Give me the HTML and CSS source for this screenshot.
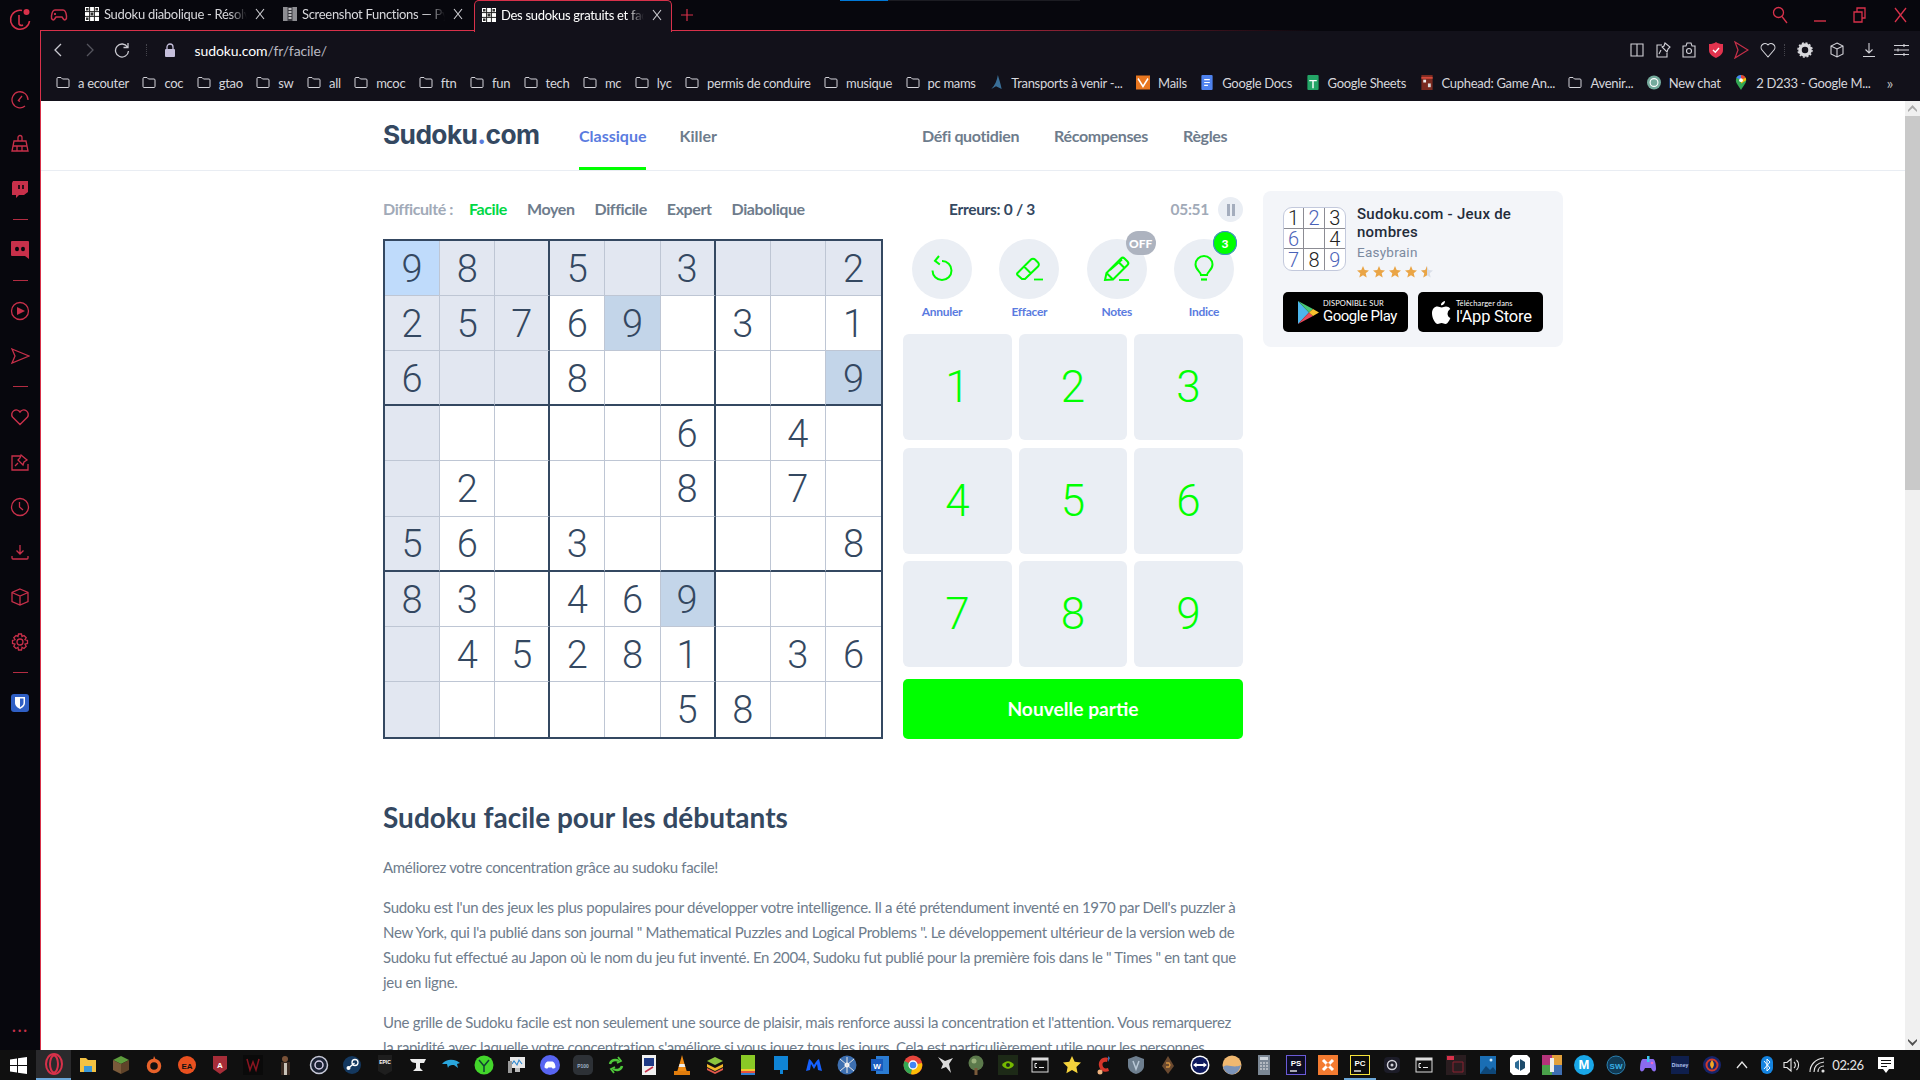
FILE: index.html
```html
<!DOCTYPE html>
<html lang="fr">
<head>
<meta charset="utf-8">
<title>Sudoku facile</title>
<link rel="stylesheet" href="styles.css">
</head>
<body>
<svg class="defs" width="0" height="0">
  <symbol id="folder" viewBox="0 0 14 12"><path d="M1 2a1 1 0 0 1 1-1h3l1.500 1.500H12a1 1 0 0 1 1 1V10a1 1 0 0 1-1 1H2a1 1 0 0 1-1-1Z" fill="none" stroke="#d4d4da" stroke-width="1"/></symbol>
  <symbol id="gridfav" viewBox="0 0 14 14"><rect width="14" height="14" fill="#fff"/><path d="M4.600 0v14M9.400 0v14M0 4.600h14M0 9.400h14" stroke="#222" stroke-width="1"/><path d="M1 1h2.500v2.500H1zM5.600 5.600h2.800v2.800H5.600zM10.500 1H13v2.500h-2.500zM1 10.500h2.500V13H1z" fill="#333"/></symbol>
  <symbol id="docfav" viewBox="0 0 14 14"><rect width="14" height="14" fill="#8d8d92"/><rect x="4.500" width="5" height="14" fill="#3a3a40"/><path d="M5.500 2h3M5.500 5h3M5.500 8h3M5.500 11h3" stroke="#e6e6e6" stroke-width="1.300"/></symbol>
  <symbol id="close" viewBox="0 0 10 12"><path d="M1 1l8 10M9 1l-8 10" stroke="#cfcfd4" stroke-width="1.100" fill="none"/></symbol>
  <symbol id="cmd" viewBox="0 0 20 20"><rect x="2" y="3" width="16" height="14" fill="#111" stroke="#ddd"/><rect x="2" y="3" width="16" height="2.500" fill="#ddd"/><path d="M5 8.500h2M5 8.500v4h2M9 12.500h5" stroke="#eee" fill="none"/></symbol>
</svg>

<div class="window">
  <aside class="sidebar">
    <div class="side-logo"><svg width="24" height="24" viewBox="0 0 24 24" fill="none" stroke="#d8314a" stroke-width="1.600"><path d="M14 3.500A9.500 9.500 0 1 0 21.500 14"/><path d="M11 8v9a3 3 0 0 0 4 1"/><circle cx="18.500" cy="5" r="3" fill="#d8314a" stroke="none"/></svg></div>
    <div class="side-item"><svg width="20" height="20" viewBox="0 0 20 20" fill="none" stroke="#c8304a" stroke-width="1.300"><path d="M15 17a8 8 0 1 1 3-6"/><path d="M8 12l4-5M8.500 11.500l1.500 1"/></svg></div>
    <div class="side-item"><svg width="20" height="20" viewBox="0 0 20 20" fill="none" stroke="#c8304a" stroke-width="1.300"><path d="M8 7V3.500a2 2 0 0 1 4 0V7M4 7h12l2 10H2ZM3 12h14M7 12v5M12 12v5"/></svg></div>
    <div class="side-item"><svg width="20" height="20" viewBox="0 0 20 20"><path d="M3 2h15v11l-4 3h-5l-3 3v-3H2V4Z" fill="#c8304a"/><path d="M9 6v4M13 6v4" stroke="#07070d" stroke-width="1.600"/></svg></div>
    <div class="side-line"></div>
    <div class="side-item"><svg width="20" height="20" viewBox="0 0 20 20"><path d="M2 1h16a1 1 0 0 1 1 1v17l-4-3H2a1 1 0 0 1-1-1V2a1 1 0 0 1 1-1Z" fill="#c8304a"/><ellipse cx="7" cy="9" rx="2" ry="2.300" fill="#07070d"/><ellipse cx="13" cy="9" rx="2" ry="2.300" fill="#07070d"/></svg></div>
    <div class="side-line"></div>
    <div class="side-item"><svg width="20" height="20" viewBox="0 0 20 20"><circle cx="10" cy="10" r="8.500" fill="none" stroke="#c8304a" stroke-width="1.300"/><path d="M7 6l8 4-8 4Z" fill="#c8304a"/></svg></div>
    <div class="side-item"><svg width="20" height="20" viewBox="0 0 20 20" fill="none" stroke="#c8304a" stroke-width="1.300"><path d="M2 3l17 7-17 7 3-7Z"/></svg></div>
    <div class="side-line"></div>
    <div class="side-item"><svg width="20" height="20" viewBox="0 0 20 20" fill="none" stroke="#c8304a" stroke-width="1.400"><path d="M10 17.500 2.500 10A4.500 4.500 0 0 1 10 5a4.500 4.500 0 0 1 7.500 5Z"/></svg></div>
    <div class="side-item"><svg width="20" height="20" viewBox="0 0 20 20" fill="none" stroke="#c8304a" stroke-width="1.300"><path d="M10 4H2v14h16v-6M11 3l6 5-3 2-1 3-5-5 2-2ZM8 11l-3 3"/></svg></div>
    <div class="side-item"><svg width="20" height="20" viewBox="0 0 20 20" fill="none" stroke="#c8304a" stroke-width="1.300"><circle cx="10" cy="10" r="8.500"/><path d="M9.500 5v5l3.500 3"/></svg></div>
    <div class="side-item"><svg width="20" height="20" viewBox="0 0 20 20" fill="none" stroke="#c8304a" stroke-width="1.300"><path d="M10 3v9M6.500 8.500 10 12l3.500-3.500M2 14v2a1 1 0 0 0 1 1h14a1 1 0 0 0 1-1v-2"/></svg></div>
    <div class="side-item"><svg width="20" height="20" viewBox="0 0 20 20" fill="none" stroke="#c8304a" stroke-width="1.300"><path d="M10 2l8 3.500v9L10 18l-8-3.500v-9ZM2 5.500 10 9l8-3.500M10 9v9"/></svg></div>
    <div class="side-item"><svg width="20" height="20" viewBox="0 0 20 20" fill="none" stroke="#c8304a" stroke-width="1.300"><circle cx="10" cy="10" r="3"/><path d="M8.500 2h3l.5 2.500 2-1 2.200 2.200-1.200 2 2.500.8v3l-2.500.7 1.200 2.100-2.200 2.200-2-1.200-.5 2.700h-3L8 15.300l-2 1.200-2.200-2.200L5 12.200 2.500 11.500v-3L5 7.700 3.800 5.700 6 3.500l2 1Z"/></svg></div>
    <div class="side-line"></div>
    <div class="side-item"><svg width="18" height="18" viewBox="0 0 18 18"><rect width="18" height="18" rx="3" fill="#2f5fc4"/><path d="M4 3h10v6c0 3-3 5-5 6-2-1-5-3-5-6Z" fill="#fff"/><path d="M9 4.500h3.500V9c0 2-2 3.500-3.500 4.300Z" fill="#2f5fc4"/></svg></div>
    <div class="side-dots">•••</div>
  </aside>

  <div class="browser">
    <header class="tabbar">
      <div class="topline"></div>
      <div class="tab-game"><svg width="18" height="14" viewBox="0 0 18 14" fill="none" stroke="#c8304a" stroke-width="1.500"><path d="M5 2h8c2 0 3 2 3.500 6s-2 5-3.500 2.500L12 9H6l-1 1.500C3.500 13 1 12 1.500 8S3 2 5 2Z"/><path d="M5 5v2M4 6h2"/></svg></div>
      <div class="tab"><svg class="fav"><use href="#gridfav"/></svg><span class="tab-title">Sudoku diabolique - Résolvez</span><svg class="tab-x"><use href="#close"/></svg></div>
      <div class="tab"><svg class="fav"><use href="#docfav"/></svg><span class="tab-title">Screenshot Functions — PyAutoGUI</span><svg class="tab-x"><use href="#close"/></svg></div>
      <div class="tab tab-active"><svg class="fav"><use href="#gridfav"/></svg><span class="tab-title">Des sudokus gratuits et faciles</span><svg class="tab-x"><use href="#close"/></svg></div>
      <div class="tab-plus"><svg width="12" height="12" viewBox="0 0 12 12" stroke="#d8314a" stroke-width="1.200"><path d="M6 0v12M0 6h12"/></svg></div>
      <div class="winbtns">
        <div class="winbtn"><svg width="16" height="18" viewBox="0 0 16 18" fill="none" stroke="#d8314a" stroke-width="1.300"><circle cx="6.500" cy="6.500" r="5"/><path d="M10 10.500l5 6.500"/></svg></div>
        <div class="winbtn"><svg width="12" height="16" viewBox="0 0 12 16" stroke="#d8314a" stroke-width="1.400"><path d="M0 14h12"/></svg></div>
        <div class="winbtn"><svg width="14" height="16" viewBox="0 0 14 16" fill="none" stroke="#d8314a" stroke-width="1.300"><path d="M1 5h8v10H1zM4 5V1h8v10H9"/></svg></div>
        <div class="winbtn"><svg width="13" height="16" viewBox="0 0 13 16" stroke="#d8314a" stroke-width="1.300"><path d="M1 1l11 14M12 1 1 15"/></svg></div>
      </div>
    </header>

    <div class="browser-body">
      <div class="toolbar">
        <div class="nav"><svg width="10" height="16" viewBox="0 0 10 16" fill="none" stroke="#c9c9d0" stroke-width="1.300"><path d="M8 2 2 8l6 6"/></svg></div>
        <div class="nav"><svg width="10" height="16" viewBox="0 0 10 16" fill="none" stroke="#55555e" stroke-width="1.300"><path d="m2 2 6 6-6 6"/></svg></div>
        <div class="nav"><svg width="16" height="16" viewBox="0 0 16 16" fill="none" stroke="#c9c9d0" stroke-width="1.300"><path d="M13.500 5A6.500 6.500 0 1 0 14.500 9M14 1v4.500H9.500"/></svg></div>
        <div class="nav-sep"></div>
        <svg class="lock" width="12" height="14" viewBox="0 0 12 14"><path d="M3 6V4a3 3 0 0 1 6 0v2" fill="none" stroke="#c5bfdc" stroke-width="1.300"/><rect x="1" y="6" width="10" height="8" rx="1" fill="#c5bfdc"/></svg>
        <div class="url"><span class="url-host">sudoku.com</span>/fr/facile/</div>
        <div class="tools-a">
          <div class="tool"><svg width="14" height="16" viewBox="0 0 14 16" fill="none" stroke="#d2d2d8" stroke-width="1.100"><path d="M1 2h12v12H1zM7 2v12"/></svg></div>
          <div class="tool"><svg width="15" height="16" viewBox="0 0 15 16" fill="none" stroke="#d2d2d8" stroke-width="1.100"><path d="M6 3H1v12h10v-4M9 1l5 4-2 2-1 3-5-5 2-1ZM5 8 3 12"/></svg></div>
          <div class="tool"><svg width="14" height="16" viewBox="0 0 14 16" fill="none" stroke="#d2d2d8" stroke-width="1.100"><path d="M1 4h3l1-3h4l1 3h3v11H1Z"/><circle cx="7" cy="9" r="2.500"/></svg></div>
          <div class="tool"><svg width="14" height="16" viewBox="0 0 14 16"><path d="M7 0c2 1.500 4 2 7 2v6c0 4-3 6-7 8-4-2-7-4-7-8V2c3 0 5-.5 7-2Z" fill="#e2334e"/><path d="M4 8l2.300 2.300L10 6" fill="none" stroke="#fff" stroke-width="1.400"/></svg></div>
          <div class="tool"><svg width="15" height="18" viewBox="0 0 15 18" fill="none" stroke="#c8304a" stroke-width="1.200"><path d="M1 1l13 8-13 8 3-8Z"/></svg></div>
          <div class="tool"><svg width="16" height="16" viewBox="0 0 16 16" fill="none" stroke="#d2d2d8" stroke-width="1.100"><path d="M8 15 2 8a3.500 3.500 0 0 1 6-5 3.500 3.500 0 0 1 6 5Z"/></svg></div>
        </div>
        <div class="tools-sep"></div>
        <div class="tools-b">
          <div class="tool-b"><svg width="16" height="16" viewBox="0 0 16 16"><circle cx="8" cy="8" r="5" fill="none" stroke="#d8d8dc" stroke-width="3.500"/><circle cx="8" cy="8" r="7" fill="none" stroke="#d8d8dc" stroke-width="1.500" stroke-dasharray="2 1.700"/></svg></div>
          <div class="tool-b"><svg width="14" height="16" viewBox="0 0 14 16" fill="none" stroke="#d2d2d8" stroke-width="1.100"><path d="M7 1l6 3v8l-6 3-6-3V4ZM1 4l6 3 6-3M7 7v8"/></svg></div>
          <div class="tool-b"><svg width="14" height="16" viewBox="0 0 14 16" fill="none" stroke="#d2d2d8" stroke-width="1.100"><path d="M7 1v10M3.500 7.500 7 11l3.500-3.500M1 14.500h12"/></svg></div>
          <div class="tool-b"><svg width="15" height="14" viewBox="0 0 15 14" fill="none" stroke="#d2d2d8" stroke-width="1.100"><path d="M0 2.500h15M0 7h15M0 11.500h15M10 1v3M4 5.500v3M10 10v3"/></svg></div>
        </div>
      </div>

      <nav class="bookmarks">
        <div class="bm"><svg class="bm-ico"><use href="#folder"/></svg>a ecouter</div>
        <div class="bm"><svg class="bm-ico"><use href="#folder"/></svg>coc</div>
        <div class="bm"><svg class="bm-ico"><use href="#folder"/></svg>gtao</div>
        <div class="bm"><svg class="bm-ico"><use href="#folder"/></svg>sw</div>
        <div class="bm"><svg class="bm-ico"><use href="#folder"/></svg>all</div>
        <div class="bm"><svg class="bm-ico"><use href="#folder"/></svg>mcoc</div>
        <div class="bm"><svg class="bm-ico"><use href="#folder"/></svg>ftn</div>
        <div class="bm"><svg class="bm-ico"><use href="#folder"/></svg>fun</div>
        <div class="bm"><svg class="bm-ico"><use href="#folder"/></svg>tech</div>
        <div class="bm"><svg class="bm-ico"><use href="#folder"/></svg>mc</div>
        <div class="bm"><svg class="bm-ico"><use href="#folder"/></svg>lyc</div>
        <div class="bm"><svg class="bm-ico"><use href="#folder"/></svg>permis de conduire</div>
        <div class="bm"><svg class="bm-ico"><use href="#folder"/></svg>musique</div>
        <div class="bm"><svg class="bm-ico"><use href="#folder"/></svg>pc mams</div>
        <div class="bm"><svg class="bm-ico" viewBox="0 0 14 16"><path d="M9 0c1 4 3 9 4 15L7 12l-5 3C6 11 8 6 9 0Z" fill="#3a6f98"/></svg>Transports à venir -...</div>
        <div class="bm"><svg class="bm-ico" viewBox="0 0 14 14"><rect width="14" height="14" fill="#e8761f"/><path d="M2 3l5 8 5-8" fill="none" stroke="#fff" stroke-width="1.500"/></svg>Mails</div>
        <div class="bm"><svg class="bm-ico" viewBox="0 0 14 16"><rect x="1" width="12" height="16" rx="1" fill="#4e82ee"/><path d="M4 5h6M4 8h6M4 11h4" stroke="#fff" stroke-width="1.300"/></svg>Google Docs</div>
        <div class="bm"><svg class="bm-ico" viewBox="0 0 14 16"><rect x="1" width="12" height="16" rx="1" fill="#23a566"/><path d="M3 6h8M7 6v8" stroke="#fff" stroke-width="1.500"/></svg>Google Sheets</div>
        <div class="bm"><svg class="bm-ico" viewBox="0 0 14 16"><rect x="1" width="12" height="16" fill="#7a2a20"/><rect x="3" y="5" width="3" height="3" fill="#eee"/><rect x="8" y="9" width="3" height="4" fill="#ddd"/><path d="M1 3h12" stroke="#d4493a" stroke-width="2"/></svg>Cuphead: Game An...</div>
        <div class="bm"><svg class="bm-ico"><use href="#folder"/></svg>Avenir...</div>
        <div class="bm"><svg class="bm-ico" viewBox="0 0 16 16"><circle cx="8" cy="8" r="8" fill="#74aa9c"/><circle cx="8" cy="8" r="4.500" fill="none" stroke="#fff" stroke-width="1.300"/></svg>New chat</div>
        <div class="bm"><svg class="bm-ico" viewBox="0 0 12 16"><path d="M6 0a5.500 5.500 0 0 1 5.500 5.500C11.500 9 8 12 6 16 4 12 .5 9 .5 5.500A5.500 5.500 0 0 1 6 0Z" fill="#34a853"/><path d="M1 3a5.500 5.500 0 0 1 5-3v5Z" fill="#4285f4"/><path d="M6 0a5.500 5.500 0 0 1 5 3L6 5Z" fill="#ea4335"/><path d="M6 5l5-2a5.500 5.500 0 0 1 .5 2.500L6 9Z" fill="#fbbc04"/><circle cx="6" cy="5.500" r="2" fill="#fff"/></svg>2 D233 - Google M...</div>
        <div class="bm-more">»</div>
      </nav>

      <main class="page">
        <div class="page-scroll">
          <div class="site-header">
            <div class="logo">Sudoku<span class="logo-dot">.</span>com</div>
            <div class="main-tabs">
              <a class="mtab mtab-on">Classique</a>
              <a class="mtab">Killer</a>
            </div>
            <div class="sec-links">
              <a class="sec">Défi quotidien</a>
              <a class="sec">Récompenses</a>
              <a class="sec">Règles</a>
            </div>
          </div>

          <div class="wrap">
            <div class="col-main">
              <div class="game">
                <div class="difficulty">
                  <span class="diff-label">Difficulté :</span>
                  <a class="diff diff-on">Facile</a>
                  <a class="diff">Moyen</a>
                  <a class="diff">Difficile</a>
                  <a class="diff">Expert</a>
                  <a class="diff">Diabolique</a>
                </div>
                <div class="status">
                  <span class="errors">Erreurs: 0 / 3</span>
                  <span class="timer">05:51</span>
                  <span class="pause"><svg width="8" height="12" viewBox="0 0 8 12" fill="#a4adbd"><rect width="3" height="12"/><rect x="5" width="3" height="12"/></svg></span>
                </div>

                <div class="board">
                  <div class="c h s">9</div><div class="c h">8</div><div class="c h b"></div><div class="c h">5</div><div class="c h"></div><div class="c h b">3</div><div class="c h"></div><div class="c h"></div><div class="c h e">2</div>
                  <div class="c h">2</div><div class="c h">5</div><div class="c h b">7</div><div class="c">6</div><div class="c m">9</div><div class="c b"></div><div class="c">3</div><div class="c"></div><div class="c e">1</div>
                  <div class="c h t">6</div><div class="c h t"></div><div class="c h t b"></div><div class="c t">8</div><div class="c t"></div><div class="c t b"></div><div class="c t"></div><div class="c t"></div><div class="c m t e">9</div>
                  <div class="c h"></div><div class="c"></div><div class="c b"></div><div class="c"></div><div class="c"></div><div class="c b">6</div><div class="c"></div><div class="c">4</div><div class="c e"></div>
                  <div class="c h"></div><div class="c">2</div><div class="c b"></div><div class="c"></div><div class="c"></div><div class="c b">8</div><div class="c"></div><div class="c">7</div><div class="c e"></div>
                  <div class="c h t">5</div><div class="c t">6</div><div class="c t b"></div><div class="c t">3</div><div class="c t"></div><div class="c t b"></div><div class="c t"></div><div class="c t"></div><div class="c t e">8</div>
                  <div class="c h">8</div><div class="c">3</div><div class="c b"></div><div class="c">4</div><div class="c">6</div><div class="c m b">9</div><div class="c"></div><div class="c"></div><div class="c e"></div>
                  <div class="c h"></div><div class="c">4</div><div class="c b">5</div><div class="c">2</div><div class="c">8</div><div class="c b">1</div><div class="c"></div><div class="c">3</div><div class="c e">6</div>
                  <div class="c h l"></div><div class="c l"></div><div class="c b l"></div><div class="c l"></div><div class="c l"></div><div class="c b l">5</div><div class="c l">8</div><div class="c l"></div><div class="c e l"></div>
                </div>

                <div class="controls">
                  <div class="actions">
                    <div class="action">
                      <div class="action-btn"><svg width="30" height="30" viewBox="0 0 30 30" fill="none" stroke="#00ff00" stroke-width="2"><path d="M15 7a9.500 9.500 0 1 1-9.500 9.500"/><path d="M12 2 8 6.800l4.800 3.700"/></svg></div>
                      <span class="action-label">Annuler</span>
                    </div>
                    <div class="action">
                      <div class="action-btn"><svg width="30" height="30" viewBox="0 0 30 30" fill="none" stroke="#00ff00" stroke-width="2"><path d="M3.500 19 17 5.500a2.800 2.800 0 0 1 4 0l3 3a2.800 2.800 0 0 1 0 4L11 25H8l-4.500-4a1.500 1.500 0 0 1 0-2ZM10 12.500l7 7"/><path d="M20 25.500h9" stroke-width="1.800"/></svg></div>
                      <span class="action-label">Effacer</span>
                    </div>
                    <div class="action">
                      <div class="action-btn"><svg width="30" height="30" viewBox="0 0 30 30" fill="none" stroke="#00ff00" stroke-width="2"><path d="M3 26l1.500-7L19 4.500a2.500 2.500 0 0 1 3.500 0l3 3a2.500 2.500 0 0 1 0 3.500L11 25.500ZM16 7.500l6.500 6.500M4.500 19l6.500 6.500M8 16 20 5.500"/><path d="M17 26h10" stroke-width="1.800"/></svg><span class="badge badge-off">OFF</span></div>
                      <span class="action-label">Notes</span>
                    </div>
                    <div class="action">
                      <div class="action-btn"><svg width="30" height="30" viewBox="0 0 30 30" fill="none" stroke="#00ff00" stroke-width="2"><path d="M12 21c0-3-5.500-5-5.500-10.500a8.500 8.500 0 0 1 17 0c0 5.500-5.500 7.500-5.500 10.500Z"/><path d="M12 25.500h6" stroke-width="2.200"/></svg><span class="badge badge-num">3</span></div>
                      <span class="action-label">Indice</span>
                    </div>
                  </div>
                  <div class="numpad">
                    <div class="key">1</div><div class="key">2</div><div class="key">3</div>
                    <div class="key">4</div><div class="key">5</div><div class="key">6</div>
                    <div class="key">7</div><div class="key">8</div><div class="key">9</div>
                  </div>
                  <div class="new-game">Nouvelle partie</div>
                </div>
              </div>

              <article class="article">
                <h2 class="article-title">Sudoku facile pour les débutants</h2>
                <p class="article-p">Améliorez votre concentration grâce au sudoku facile!</p>
                <p class="article-p">Sudoku est l'un des jeux les plus populaires pour développer votre intelligence. Il a été prétendument inventé en 1970 par Dell's puzzler à<br>New York, qui l'a publié dans son journal " Mathematical Puzzles and Logical Problems ". Le développement ultérieur de la version web de<br>Sudoku fut effectué au Japon où le nom du jeu fut inventé. En 2004, Sudoku fut publié pour la première fois dans le " Times " en tant que<br>jeu en ligne.</p>
                <p class="article-p">Une grille de Sudoku facile est non seulement une source de plaisir, mais renforce aussi la concentration et l'attention. Vous remarquerez<br>la rapidité avec laquelle votre concentration s'améliore si vous jouez tous les jours. Cela est particulièrement utile pour les personnes</p>
              </article>
            </div>

            <aside class="promo">
              <div class="promo-top">
                <div class="app-icon">
                  <span class="ai">1</span><span class="ai ai-b">2</span><span class="ai">3</span>
                  <span class="ai ai-b">6</span><span class="ai"></span><span class="ai">4</span>
                  <span class="ai ai-b">7</span><span class="ai">8</span><span class="ai ai-b">9</span>
                </div>
                <div class="app-info">
                  <div class="app-name">Sudoku.com - Jeux de nombres</div>
                  <div class="app-dev">Easybrain</div>
                  <div class="stars">
                    <svg class="star" viewBox="0 0 12 12"><path d="M6 0l1.700 4.100 4.300.3-3.300 2.800 1 4.300L6 9.200 2.300 11.500l1-4.300L0 4.400l4.300-.3Z" fill="#eaa546"/></svg>
                    <svg class="star" viewBox="0 0 12 12"><path d="M6 0l1.700 4.100 4.300.3-3.300 2.800 1 4.300L6 9.200 2.300 11.500l1-4.300L0 4.400l4.300-.3Z" fill="#eaa546"/></svg>
                    <svg class="star" viewBox="0 0 12 12"><path d="M6 0l1.700 4.100 4.300.3-3.300 2.800 1 4.300L6 9.200 2.300 11.500l1-4.300L0 4.400l4.300-.3Z" fill="#eaa546"/></svg>
                    <svg class="star" viewBox="0 0 12 12"><path d="M6 0l1.700 4.100 4.300.3-3.300 2.800 1 4.300L6 9.200 2.300 11.500l1-4.300L0 4.400l4.300-.3Z" fill="#eaa546"/></svg>
                    <svg class="star" viewBox="0 0 12 12"><path d="M6 0l1.700 4.100 4.300.3-3.300 2.800 1 4.300L6 9.200 2.300 11.500l1-4.300L0 4.400l4.300-.3Z" fill="#d9dee8"/><path d="M6 0v9.200L2.300 11.500l1-4.300L0 4.400l4.300-.3Z" fill="#eaa546"/></svg>
                  </div>
                </div>
              </div>
              <div class="stores">
                <div class="store">
                  <svg width="23" height="25" viewBox="0 0 23 25"><path d="M1 1v23l11-11.500Z" fill="#4db6ec"/><path d="M1 1l15 8-4 3.500Z" fill="#48c774"/><path d="M1 24l15-8-4-3.500Z" fill="#e9495a"/><path d="M16 9l6 3.500-6 3.500-4-3.500Z" fill="#f9c22e"/></svg>
                  <div class="store-text store-text-play"><span class="store-small">DISPONIBLE SUR</span><span class="store-big store-big-play">Google Play</span></div>
                </div>
                <div class="store">
                  <svg width="19" height="23" viewBox="0 0 19 23" fill="#fff"><path d="M13 0c.2 2-1.800 4.500-4 4.300C8.800 2.200 11 .2 13 0ZM15.700 12.200c0-2.200 1.300-3.500 2.600-4.300-1-1.500-2.800-2.300-4.300-2.300-1.800 0-3 1-4.300 1-1.400 0-2.700-1-4.300-1C2.500 5.600 0 8.200 0 12.300 0 17 3 23 5.800 23c1.300 0 2-.9 3.800-.9s2.400.9 3.800.9c2.200 0 4-3.700 5-6-2-.8-2.900-2.600-2.900-4.800Z"/></svg>
                  <div class="store-text"><span class="store-small">Télécharger dans</span><span class="store-big">l'App Store</span></div>
                </div>
              </div>
            </aside>
          </div>
        </div>
        <div class="scrollbar">
          <div class="sb-arrow"><svg width="9" height="7" viewBox="0 0 9 7" fill="#a8a8a8"><path d="M4.500 0 9 5v2L4.500 3 0 7V5Z"/></svg></div>
          <div class="sb-track"><div class="sb-thumb"></div></div>
          <div class="sb-arrow"><svg width="9" height="7" viewBox="0 0 9 7" fill="#505050"><path d="M4.500 7 0 2V0l4.500 4L9 0v2Z"/></svg></div>
        </div>
      </main>
    </div>
  </div>
</div>

<footer class="taskbar">
  <div class="tb-start"><svg width="17" height="17" viewBox="0 0 17 17" fill="#fff"><path d="M0 2.400 7 1.400V8H0ZM8 1.200 17 0v8H8ZM0 9h7v6.600L0 14.600ZM8 9h9v8l-9-1.300Z"/></svg></div>
  <div class="tb-opera"><svg width="20" height="22" viewBox="0 0 20 22" fill="none" stroke="#d8314a" stroke-width="2"><ellipse cx="10" cy="11" rx="8" ry="10"/><ellipse cx="10" cy="11" rx="4" ry="8.500"/></svg></div>
  <div class="tb-apps">
    <div class="ti"><svg class="tsv" viewBox="0 0 20 20"><path d="M2 3h6l2 2h8v12H2Z" fill="#f3c243"/><path d="M6 11h8v6H6Z" fill="#3a98d8"/></svg></div>
    <div class="ti"><svg class="tsv" viewBox="0 0 20 20"><path d="M10 1l8 4-8 4-8-4Z" fill="#5d9c3c"/><path d="M2 5l8 4v10l-8-4Z" fill="#7a5a3a"/><path d="M18 5l-8 4v10l8-4Z" fill="#5f4329"/></svg></div>
    <div class="ti"><svg class="tsv" viewBox="0 0 20 20"><circle cx="10" cy="11" r="5.500" fill="none" stroke="#e8622a" stroke-width="3.500"/><path d="M10 1l2 4h-3Z" fill="#e8622a"/></svg></div>
    <div class="ti"><svg class="tsv" viewBox="0 0 20 20"><circle cx="10" cy="10" r="9" fill="#e9501f"/><text x="10" y="13.500" class="tt" fill="#111">EA</text></svg></div>
    <div class="ti"><svg class="tsv" viewBox="0 0 20 20"><path d="M3 1h14v13l-7 5-7-5Z" fill="#a72d38"/><text x="10" y="13" class="tt" fill="#fff">A</text></svg></div>
    <div class="ti"><svg class="tsv" viewBox="0 0 20 20"><rect width="20" height="20" fill="#0a0a0a"/><path d="M4 4l3 11 3-8 3 8 3-11" fill="none" stroke="#8a1520" stroke-width="1.500"/></svg></div>
    <div class="ti"><svg class="tsv" viewBox="0 0 20 20"><circle cx="9" cy="4" r="3" fill="#7a5238"/><path d="M5 7h9v13H5Z" fill="#3a2a22"/><path d="M8 8h3v12H8Z" fill="#c9c2b8"/></svg></div>
    <div class="ti"><svg class="tsv" viewBox="0 0 20 20"><circle cx="10" cy="10" r="8.500" fill="#1b2233" stroke="#c7c9d8" stroke-width="1.500"/><circle cx="10" cy="10" r="4" fill="none" stroke="#d7d0ea" stroke-width="1.500"/></svg></div>
    <div class="ti"><svg class="tsv" viewBox="0 0 20 20"><circle cx="10" cy="10" r="9" fill="#14385f"/><circle cx="13" cy="7.500" r="3" fill="none" stroke="#fff" stroke-width="1.300"/><circle cx="6.500" cy="13" r="2" fill="#fff"/><path d="M6.500 13l6-5" stroke="#fff" stroke-width="1.300"/></svg></div>
    <div class="ti"><svg class="tsv" viewBox="0 0 20 20"><path d="M3 0h14v16l-7 4-7-4Z" fill="#1e1e1e"/><text x="10" y="9" class="tt tt-s" fill="#fff">EPIC</text></svg></div>
    <div class="ti"><svg class="tsv" viewBox="0 0 20 20"><path d="M2 4h16l-2 4h-4v5l3 3H5l3-3V8C5 8 3 7 2 4Z" fill="#eee"/></svg></div>
    <div class="ti"><svg class="tsv" viewBox="0 0 20 20"><path d="M1 9c4-5 10-5 15-3l3 2-3 1 1 4-4-3c-3 0-5 0-6 3L6 9 1 9Z" fill="#2aa6dd"/></svg></div>
    <div class="ti"><svg class="tsv" viewBox="0 0 20 20"><circle cx="10" cy="10" r="9.500" fill="#43d62b"/><path d="M5 5l5 6 5-6M10 11v6" fill="none" stroke="#143" stroke-width="1.500"/></svg></div>
    <div class="ti"><svg class="tsv" viewBox="0 0 20 20"><rect x="3" y="2" width="15" height="11" fill="#e8e8e8"/><path d="M5 9l2-3 3 4 2-5 3 4" fill="none" stroke="#2b87d1" stroke-width="1.100"/><rect x="1" y="6" width="4" height="12" fill="#9a9a9a"/><path d="M8 13h5v4H8Z" fill="#bbb"/></svg></div>
    <div class="ti"><svg class="tsv" viewBox="0 0 20 20"><circle cx="10" cy="10" r="10" fill="#5865f2"/><path d="M4.500 12.500c0-4 2-6 3.500-6h4c1.500 0 3.500 2 3.500 6-1 1-2 1-3 1l-.7-1H8.200l-.7 1c-1 0-2 0-3-1Z" fill="#fff"/></svg></div>
    <div class="ti"><svg class="tsv" viewBox="0 0 20 20"><rect width="20" height="20" rx="5" fill="#2d3136"/><text x="10" y="13" class="tt tt-s" fill="#9db4c8">P100</text></svg></div>
    <div class="ti"><svg class="tsv" viewBox="0 0 20 20" fill="none" stroke="#4fc83a" stroke-width="2.500"><path d="M4 9c1-4 5-5 9-3M16 11c-1 4-5 5-9 3"/><path d="M12 2l3 4-4 2M8 18l-3-4 4-2" stroke-width="1.800"/></svg></div>
    <div class="ti"><svg class="tsv" viewBox="0 0 20 20"><rect x="3" width="14" height="20" fill="#f0f0f0"/><path d="M5 3h10v8H5Z" fill="#1e3a86"/><path d="M6 17l8-5" stroke="#c8304a" stroke-width="1.500"/></svg></div>
    <div class="ti"><svg class="tsv" viewBox="0 0 20 20"><path d="M10 0l2.500 9 2.500 8H5l2.500-8Z" fill="#f08a12"/><path d="M7.500 9h5l.8 3H6.700Z" fill="#eee"/><rect x="2" y="16" width="16" height="4" fill="#e07c0c"/></svg></div>
    <div class="ti"><svg class="tsv" viewBox="0 0 20 20"><path d="M10 2l8 4-8 4-8-4Z" fill="#8bc53f"/><path d="M2 9l8 4 8-4v3l-8 4-8-4Z" fill="#f3b629"/><path d="M2 13l8 4 8-4v2l-8 4-8-4Z" fill="#e35a4d"/></svg></div>
    <div class="ti"><svg class="tsv" viewBox="0 0 20 20"><rect x="3" width="14" height="14" fill="#8ac926"/><rect x="3" y="14" width="14" height="2" fill="#f5c92d"/><rect x="3" y="16" width="14" height="2" fill="#e5533d"/><rect x="3" y="18" width="14" height="2" fill="#2f7fd1"/></svg></div>
    <div class="ti"><svg class="tsv" viewBox="0 0 20 20"><path d="M3 1h14v14h-5v4H9v-4H3Z" fill="#0f84d6"/></svg></div>
    <div class="ti"><svg class="tsv" viewBox="0 0 20 20"><path d="M2 16 5 4c1 0 4 4 5 6 1-2 4-6 5-6l3 12-4-1-1-6-3 5-3-5-1 6Z" fill="#1560ff"/></svg></div>
    <div class="ti"><svg class="tsv" viewBox="0 0 20 20"><circle cx="10" cy="10" r="9.500" fill="#3d6fb0"/><circle cx="10" cy="10" r="2.500" fill="#fff"/><path d="M3 4l14 12M17 4 3 16M10 2v16" stroke="#e6e6e6" stroke-width="1"/></svg></div>
    <div class="ti"><svg class="tsv" viewBox="0 0 20 20"><rect x="6" y="1" width="13" height="18" fill="#2b7cd3"/><rect x="1" y="4" width="12" height="12" fill="#185abd"/><text x="7" y="13.500" class="tt" fill="#fff">W</text></svg></div>
    <div class="ti"><svg class="tsv" viewBox="0 0 20 20"><circle cx="10" cy="10" r="9.500" fill="#e8453c"/><path d="M10 10 1.500 6A9.500 9.500 0 0 0 8 19.300Z" fill="#34a853"/><path d="M10 10l9-2a9.500 9.500 0 0 1-11 11.300Z" fill="#fbbc05"/><circle cx="10" cy="10" r="4" fill="#4285f4" stroke="#fff" stroke-width="1.300"/></svg></div>
    <div class="ti"><svg class="tsv" viewBox="0 0 20 20"><path d="M2 2l7 4 8-3-4 6 2 9-5-6-5 2 2-5Z" fill="#dcdcdc"/></svg></div>
    <div class="ti"><svg class="tsv" viewBox="0 0 20 20"><circle cx="10" cy="8" r="7.500" fill="#5c7a4c"/><circle cx="8" cy="6" r="2.500" fill="#9ab17c"/><rect x="8.500" y="13" width="3" height="7" fill="#7a5a3a"/></svg></div>
    <div class="ti"><svg class="tsv" viewBox="0 0 20 20"><rect width="20" height="20" fill="#1d2a17"/><path d="M4 10c3-5 9-5 12 0-3 5-9 5-12 0Z" fill="#76b900"/><circle cx="10" cy="10" r="2" fill="#1d2a17"/></svg></div>
    <div class="ti"><svg class="tsv"><use href="#cmd"/></svg></div>
    <div class="ti"><svg class="tsv" viewBox="0 0 20 20"><path d="M10 1l2.700 5.800 6.300.8-4.600 4.300 1.200 6.300-5.600-3.100-5.600 3.100 1.200-6.300L1 7.600l6.300-.8Z" fill="#f5d33c"/></svg></div>
    <div class="ti"><svg class="tsv" viewBox="0 0 20 20"><path d="M14 3C8 1 4 6 5 11c1 5 6 7 10 5l-1-3c-3 1-5 0-5.500-3C8 8 10 6 13 7Z" fill="#d4352a"/><path d="M14 1l2 2-2 4Z" fill="#3a6fb0"/><circle cx="6" cy="17" r="2.500" fill="#f0b37e"/></svg></div>
    <div class="ti"><svg class="tsv" viewBox="0 0 20 20"><path d="M10 1l8 3v7c0 4-4 7-8 8-4-1-8-4-8-8V4Z" fill="#6e7f8f"/><path d="M7 6l3 8 3-8" fill="none" stroke="#b9c8d6" stroke-width="1.500"/></svg></div>
    <div class="ti"><svg class="tsv" viewBox="0 0 20 20"><path d="M10 1l6 10-6 8-6-8Z" fill="#6b4a30"/><path d="M8 8h3l1 2-1 2H8" fill="none" stroke="#d59440" stroke-width="1.300"/></svg></div>
    <div class="ti"><svg class="tsv" viewBox="0 0 20 20"><circle cx="10" cy="10" r="9.500" fill="#fff"/><circle cx="10" cy="10" r="8" fill="#0e1a5e"/><path d="M3 10l3.500-2.500V9h7V7.500L17 10l-3.500 2.500V11h-7v1.500Z" fill="#fff"/></svg></div>
    <div class="ti"><svg class="tsv" viewBox="0 0 20 20"><circle cx="10" cy="10" r="9.500" fill="#f0b870"/><path d="M1 12c5-4 10 2 18-2-1 5-5 9.500-9 9.500S2 16 1 12Z" fill="#7b93b8"/></svg></div>
    <div class="ti"><svg class="tsv" viewBox="0 0 20 20"><rect x="4" width="12" height="20" fill="#7b8794"/><rect x="6" y="2" width="8" height="3" fill="#cfd6dd"/><path d="M6.500 8h1M9.500 8h1M12.500 8h1M6.500 11h1M9.500 11h1M12.500 11h1M6.500 14h1M9.500 14h1M12.500 14h1" stroke="#eee" stroke-width="2"/></svg></div>
    <div class="ti"><svg class="tsv" viewBox="0 0 20 20"><rect x=".5" y=".5" width="19" height="19" fill="#0c0c22" stroke="#6a5ad8"/><text x="10" y="11" class="tt" fill="#fff">PS</text><path d="M4 16h7" stroke="#fff" stroke-width="1.300"/></svg></div>
    <div class="ti"><svg class="tsv" viewBox="0 0 20 20"><rect width="20" height="20" fill="#f47b30"/><path d="M5 5l10 10M15 5 5 15" stroke="#fff" stroke-width="3"/><circle cx="10" cy="10" r="2" fill="#f47b30"/></svg></div>
    <div class="ti"><svg class="tsv" viewBox="0 0 20 20"><rect x=".5" y=".5" width="19" height="19" fill="#0c0c0c" stroke="#f5e23a"/><text x="10" y="11" class="tt" fill="#fff">PC</text><path d="M4 16h7" stroke="#fff" stroke-width="1.300"/></svg></div>
    <div class="ti"><svg class="tsv" viewBox="0 0 20 20"><rect x="2" y="2" width="16" height="16" rx="4" fill="#1c1c28"/><circle cx="10" cy="10" r="4.500" fill="none" stroke="#d0d0d8" stroke-width="1.500"/><circle cx="10" cy="10" r="1.500" fill="#d0d0d8"/></svg></div>
    <div class="ti"><svg class="tsv"><use href="#cmd"/></svg></div>
    <div class="ti"><svg class="tsv" viewBox="0 0 20 20"><rect width="20" height="20" fill="#2a1d20"/><rect x="1" y="1" width="7" height="4" fill="#d8314a"/><path d="M7 7h10v10H7Z" fill="none" stroke="#8a2230"/></svg></div>
    <div class="ti"><svg class="tsv" viewBox="0 0 20 20"><rect x="2" y="1" width="16" height="18" fill="#1a6eb4"/><path d="M2 19l6-8 4 4 3-3 3 4v3Z" fill="#0e4779"/><circle cx="13" cy="5" r="1.500" fill="#cfe8fb"/></svg></div>
    <div class="ti"><svg class="tsv" viewBox="0 0 20 20"><path d="M3 0h14l3 3v14l-3 3H3l-3-3V3Z" fill="#fff"/><path d="M10 4l5 3v6l-5 3V4Z" fill="#1d4b6a"/><path d="M9 5 5 7.500v5L9 15Z" fill="#2c6b95"/></svg></div>
    <div class="ti"><svg class="tsv" viewBox="0 0 20 20"><rect width="10" height="10" fill="#b4347a"/><rect x="10" width="10" height="10" fill="#e2a03c"/><rect y="10" width="10" height="10" fill="#4aa24a"/><rect x="10" y="10" width="10" height="10" fill="#3f6fb3"/><rect x="8" y="3" width="4" height="14" fill="#eee"/></svg></div>
    <div class="ti"><svg class="tsv" viewBox="0 0 20 20"><circle cx="10" cy="10" r="10" fill="#19a7e8"/><text x="10" y="14" class="tt tt-b" fill="#fff">M</text></svg></div>
    <div class="ti"><svg class="tsv" viewBox="0 0 20 20"><circle cx="10" cy="10" r="9" fill="#103a54" stroke="#2a80b0"/><text x="10" y="13.500" class="tt" fill="#3ab0e6">SW</text></svg></div>
    <div class="ti"><svg class="tsv" viewBox="0 0 20 20"><path d="M5 4h10c2 0 3 6 3 10 0 3-3 3-4 1l-1-2H7l-1 2c-1 2-4 2-4-1 0-4 1-10 3-10Z" fill="#8b6bf0"/><rect x="9" y="1" width="2.500" height="6" fill="#3cc4ee"/><circle cx="14" cy="8" r="1.300" fill="#f06bc1"/></svg></div>
    <div class="ti"><svg class="tsv" viewBox="0 0 20 20"><rect x="1" y="1" width="18" height="18" fill="#0f1f4d"/><text x="10" y="12" class="tt tt-s" fill="#b6c8f4">Disney</text></svg></div>
    <div class="ti"><svg class="tsv" viewBox="0 0 20 20"><circle cx="10" cy="10" r="9" fill="#16246a"/><circle cx="10" cy="10" r="5.500" fill="none" stroke="#d03a2c" stroke-width="2"/><path d="M10 5c2 3 3 5 0 9-3-4-2-6 0-9Z" fill="#f2a623"/></svg></div>
  </div>
  <div class="tray">
    <div class="tray-up"><svg width="12" height="8" viewBox="0 0 12 8" fill="none" stroke="#e6e6e6" stroke-width="1.300"><path d="M1 7l5-6 5 6"/></svg></div>
    <div class="tray-ico"><svg width="12" height="18" viewBox="0 0 12 18"><rect width="12" height="18" rx="6" fill="#1584e0"/><path d="M3 5l6 7-3 3V3l3 3-6 7" fill="none" stroke="#fff"/></svg></div>
    <div class="tray-ico"><svg width="18" height="16" viewBox="0 0 18 16" fill="none" stroke="#e6e6e6" stroke-width="1.100"><path d="M1 5.500h3L8 2v12l-4-3.500H1ZM11 5a4 4 0 0 1 0 6M13.500 3a7 7 0 0 1 0 10"/></svg></div>
    <div class="tray-ico"><svg width="18" height="16" viewBox="0 0 18 16" fill="none" stroke="#e6e6e6" stroke-width="1.100"><path d="M2 15c0-7 5-13 14-14M6 15c0-5 3-9 10-10M10 15c0-3 2-6 6-6"/><circle cx="15" cy="14" r="1" fill="#e6e6e6"/></svg></div>
    <div class="tray-clock">02:26</div>
    <div class="tray-note"><svg width="16" height="16" viewBox="0 0 16 16"><path d="M0 0h16v12h-5l-3 4-3-4H0Z" fill="#fff"/><path d="M3 3.500h10M3 6.500h10M3 9.500h6" stroke="#111" stroke-width="1.100"/></svg></div>
  </div>
</footer>
</body>
</html>
```

FILE: styles.css
```css
:root {
  --ui: "Lato", "Noto Sans", sans-serif;
  --ink: #344861;
  --muted: #6e7c8c;
  --panel: #eaeef4;
  --green: #00ff00;
  --red: #d8314a;
  --chrome: #12111a;
  --chrome-dark: #07070d;
}
* { box-sizing: border-box; }
html, body { margin: 0; height: 100%; }
body {
  width: 1920px;
  height: 1080px;
  overflow: hidden;
  display: flex;
  flex-direction: column;
  font-family: var(--ui);
  background: var(--chrome-dark);
}
.defs { position: absolute; }
.window { flex: 1; display: flex; min-height: 0; }

/* sidebar */
.sidebar {
  width: 40px;
  flex: none;
  display: flex;
  flex-direction: column;
  align-items: center;
  background: var(--chrome-dark);
  padding-bottom: 14px;
}
.side-logo { height: 38px; margin-bottom: 38px; display: flex; align-items: center; justify-content: center; }
.side-item { height: 45px; display: flex; align-items: center; justify-content: center; flex: none; }
.side-line { width: 15px; height: 1px; background: #b32c42; margin: 8px 0 7px; flex: none; }
.side-dots { margin-top: auto; color: #c8304a; font-size: 8px; letter-spacing: 1px; font-family: "DejaVu Sans", sans-serif; }

/* browser frame */
.browser { flex: 1; min-width: 0; display: flex; flex-direction: column; }
.tabbar {
  height: 31px;
  flex: none;
  display: flex;
  align-items: stretch;
  position: relative;
  background: var(--chrome-dark);
  border-bottom: 1px solid;
  border-image: linear-gradient(90deg, var(--red) 0, var(--red) 45%, transparent 68%) 1;
}
.topline {
  position: absolute;
  left: 800px;
  top: 0;
  width: 240px;
  height: 1px;
  background: linear-gradient(90deg, #0078d7 0, #0078d7 20%, #1c1c22 20%);
}
.tab-game { width: 38px; display: flex; align-items: center; justify-content: center; }
.tab {
  width: 198px;
  flex: none;
  display: flex;
  align-items: center;
  padding: 0 11px 3px 7px;
  color: #d8d8dc;
  font-size: 13px;
}
.fav { width: 14px; height: 14px; flex: none; margin-right: 5px; }
.tab-title {
  flex: 1;
  min-width: 0;
  overflow: hidden;
  white-space: nowrap;
  letter-spacing: -0.3px;
  -webkit-mask-image: linear-gradient(90deg, #000 88%, transparent);
  mask-image: linear-gradient(90deg, #000 88%, transparent);
}
.tab-x { width: 10px; height: 12px; flex: none; margin-left: 8px; }
.tab-active {
  height: 32px;
  margin-bottom: -1px;
  padding-right: 9px;
  color: #fff;
  background: var(--chrome);
  border: 1px solid var(--red);
  border-bottom: 0;
  border-radius: 5px 5px 0 0;
}
.tab-plus { width: 30px; display: flex; align-items: center; justify-content: center; }
.winbtns { margin-left: auto; display: flex; }
.winbtn { width: 40px; display: flex; align-items: center; justify-content: center; }

.browser-body {
  flex: 1;
  min-height: 0;
  display: flex;
  flex-direction: column;
  border-left: 1px solid var(--red);
}
.toolbar {
  height: 38px;
  flex: none;
  display: flex;
  align-items: center;
  background: var(--chrome);
  padding: 0 3px 0 1px;
}
.nav { width: 32.200px; display: flex; justify-content: center; }
.nav-sep { width: 1px; height: 12px; margin: 0 17px 0 7px; border-left: 1px dotted #44444c; }
.lock { flex: none; margin-right: 19px; }
.url { color: #b9b9c2; font-size: 14px; flex: 1; letter-spacing: -0.1px; }
.url-host { color: #fff; }
.tools-a { display: flex; }
.tool { width: 26.200px; display: flex; justify-content: center; align-items: center; }
.tools-sep { width: 1px; height: 12px; margin: 0 4px 0 3px; border-left: 1px dotted #44444c; }
.tools-b { display: flex; }
.tool-b { width: 32px; display: flex; justify-content: center; align-items: center; }

.bookmarks {
  height: 32px;
  flex: none;
  display: flex;
  align-items: center;
  gap: 13.500px;
  padding: 0 27px 5px 15px;
  background: var(--chrome);
  color: #d6d6dc;
  font-size: 13px;
  letter-spacing: -0.3px;
  white-space: nowrap;
}
.bm { display: flex; align-items: center; gap: 8px; }
.bm-ico { width: 14px; height: 15px; flex: none; }
.bm-more { margin-left: auto; font-size: 16px; color: #bbb; }

/* page */
.page { flex: 1; min-height: 0; display: flex; background: #fff; overflow: hidden; }
.page-scroll { flex: 1; min-width: 0; overflow: hidden; }
.site-header {
  height: 70px;
  display: flex;
  align-items: center;
  padding-left: 342px;
  border-bottom: 1px solid #e9edf3;
  color: var(--muted);
}
.logo { width: 196px; padding-bottom: 2px; font-family: "Inter", sans-serif; font-weight: 700; font-size: 26.300px; letter-spacing: -0.6px; color: var(--ink); }
.logo-dot { color: #5a7bdc; }
.main-tabs { display: flex; gap: 33px; align-self: stretch; }
.mtab { display: flex; align-items: center; height: 69px; padding-top: 2px; font-size: 16px; font-weight: 700; color: #6e7c8c; border-bottom: 3px solid transparent; margin-bottom: -1px; }
.mtab-on { color: #5a7be0; border-bottom-color: var(--green); }
.sec-links { display: flex; gap: 35px; margin-left: 205px; }
.sec { font-size: 16px; font-weight: 700; letter-spacing: -0.35px; color: #6e7c8c; }

.wrap { display: flex; padding: 20px 0 0 342px; gap: 20px; }
.col-main { width: 860px; flex: none; }
.game {
  display: grid;
  grid-template-columns: 500px 340px;
  grid-template-rows: 48px 500px;
  column-gap: 20px;
}
.difficulty { display: flex; align-items: flex-start; gap: 20px; padding-top: 8px; font-size: 16px; font-weight: 700; letter-spacing: -0.4px; color: var(--muted); }
.diff-label { color: #a1aab8; margin-right: -4px; }
.diff-on { color: #00d845; }
.status { display: flex; align-items: flex-start; padding-top: 9px; font-size: 15.500px; font-weight: 700; letter-spacing: -0.3px; color: var(--ink); }
.errors { margin-left: 46px; flex: 1; }
.timer { color: #a1aab8; margin-right: 9px; }
.pause { width: 25px; height: 25px; margin-top: -3px; border-radius: 50%; background: var(--panel); display: flex; align-items: center; justify-content: center; }

.board {
  display: grid;
  grid-template-columns: repeat(9, 1fr);
  grid-template-rows: repeat(9, 1fr);
  border: 2px solid var(--ink);
}
.c {
  display: flex;
  align-items: center;
  justify-content: center;
  padding-top: 2px;
  border-right: 1px solid #bec6d4;
  border-bottom: 1px solid #bec6d4;
  font-family: "Roboto", sans-serif;
  font-weight: 300;
  font-size: 38px;
  color: var(--ink);
  background: #fff;
}
.c.b { border-right: 2px solid var(--ink); }
.c.t { border-bottom: 2px solid var(--ink); }
.c.e { border-right: 0; }
.c.l { border-bottom: 0; }
.c.h { background: #e2e7f1; }
.c.m { background: #c3d5e9; }
.c.s { background: #bfdbfb; }

.controls { display: flex; flex-direction: column; }
.actions { display: flex; justify-content: space-between; padding: 0 9px; height: 95px; }
.action { width: 60px; display: flex; flex-direction: column; align-items: center; }
.action-btn {
  width: 60px;
  height: 60px;
  flex: none;
  border-radius: 50%;
  background: var(--panel);
  position: relative;
  display: flex;
  align-items: center;
  justify-content: center;
}
.action-label { margin-top: 5px; font-size: 12px; font-weight: 700; letter-spacing: -0.3px; color: #5a7be0; white-space: nowrap; }
.badge {
  position: absolute;
  display: flex;
  align-items: center;
  justify-content: center;
  font-size: 12px;
  font-weight: 900;
  color: #fff;
}
.badge-off { top: -8px; right: -9px; width: 30px; height: 24px; border-radius: 12px; background: #adb3bf; }
.badge-num { top: -8px; right: -3px; width: 24px; height: 24px; border-radius: 50%; background: var(--green); box-shadow: inset 0 0 0 1px #4a7de0; }
.numpad {
  display: grid;
  grid-template-columns: 109px 108px 109px;
  grid-template-rows: repeat(3, 106px);
  column-gap: 7px;
  row-gap: 7.500px;
  margin-bottom: 12px;
}
.key {
  display: flex;
  align-items: center;
  justify-content: center;
  border-radius: 6px;
  background: var(--panel);
  font-family: "Roboto", sans-serif;
  font-weight: 300;
  font-size: 44px;
  color: var(--green);
}
.new-game {
  height: 60px;
  padding-bottom: 2px;
  border-radius: 5px;
  background: var(--green);
  display: flex;
  align-items: center;
  justify-content: center;
  color: #fff;
  font-size: 19.200px;
  font-weight: 700;
}

.article { padding-top: 61px; }
.article-title { margin: 0; font-size: 28px; line-height: 34px; font-weight: 700; color: var(--ink); }
.article-p { margin: 15px 0 0; font-size: 15px; line-height: 25px; letter-spacing: -0.32px; color: var(--muted); white-space: nowrap; }
.article-title + .article-p { margin-top: 21px; }

.promo {
  width: 300px;
  height: 156px;
  flex: none;
  background: #f3f5f9;
  border-radius: 8px;
  padding: 16px 20px;
}
.promo-top { display: flex; gap: 11px; height: 85px; }
.app-icon {
  width: 63px;
  height: 64px;
  flex: none;
  display: grid;
  grid-template-columns: repeat(3, minmax(0, 1fr));
  grid-template-rows: repeat(3, minmax(0, 1fr));
  background: #fff;
  border: 1px solid #c3c9dc;
  border-radius: 9px;
  overflow: hidden;
}
.ai { display: flex; align-items: center; justify-content: center; line-height: 1; font-family: "Roboto", sans-serif; font-weight: 300; font-size: 20px; color: #222; border-right: 1px solid #8c8c94; border-bottom: 1px solid #8c8c94; }
.ai:nth-child(3n) { border-right: 0; }
.ai:nth-child(n+7) { border-bottom: 0; }
.ai-b { color: #4a62b8; }
.app-info { width: 190px; margin-top: -2px; }
.app-name { font-family: "Roboto", sans-serif; font-size: 15px; line-height: 18px; font-weight: 500; color: #242c3a; letter-spacing: 0.25px; }
.app-dev { font-family: "Roboto", sans-serif; font-size: 13.500px; line-height: 20px; margin-top: 1px; letter-spacing: 0.25px; color: #7c8aa0; }
.stars { display: flex; gap: 4px; margin-top: 4px; }
.star { width: 12px; height: 12px; }
.stores { display: flex; gap: 10px; }
.store {
  width: 125px;
  height: 40px;
  background: #000;
  border-radius: 5px;
  display: flex;
  align-items: center;
  gap: 5px;
  padding-left: 14px;
  color: #fff;
}
.store-text { display: flex; flex-direction: column; white-space: nowrap; }
.store-text-play { margin-left: -2px; }
.store-small { font-size: 7.500px; line-height: 9px; letter-spacing: 0.1px; }
.store-big { font-family: "Roboto", sans-serif; font-size: 16.500px; line-height: 17px; letter-spacing: -0.2px; }
.store-big-play { font-size: 15px; letter-spacing: -0.5px; }

.scrollbar { width: 15px; flex: none; display: flex; flex-direction: column; background: #f0f0f0; }
.sb-arrow { height: 15px; display: flex; align-items: center; justify-content: center; flex: none; }
.sb-track { flex: 1; }
.sb-thumb { height: 374px; background: #c9c9c9; }

/* taskbar */
.taskbar {
  height: 30px;
  flex: none;
  display: flex;
  align-items: stretch;
  background: #101010;
}
.tb-start { width: 36px; display: flex; align-items: center; justify-content: center; }
.tb-opera { width: 35px; display: flex; align-items: center; justify-content: center; background: #2a2a2c; border-bottom: 2px solid #6ba7d8; }
.tb-apps { display: flex; }
.ti { width: 33px; display: flex; align-items: center; justify-content: center; }
.ti:nth-child(n+28) { width: 32px; }
.ti:nth-child(28) { margin-left: -2px; }
.tsv { width: 20px; height: 20px; }
.tt { font-family: "Liberation Sans", sans-serif; font-size: 8px; font-weight: 700; text-anchor: middle; }
.tt-s { font-size: 5px; }
.tt-b { font-size: 13px; }
.ti:nth-child(40) { box-shadow: inset 0 -2px 0 #6ba7d8; }
.tray { margin-left: auto; display: flex; align-items: center; }
.tray-up { width: 24px; display: flex; justify-content: center; }
.tray-ico { width: 25px; display: flex; justify-content: center; }
.tray-clock { width: 32px; margin-left: 3px; color: #e6e6e6; font-size: 13px; text-align: center; letter-spacing: -0.4px; white-space: nowrap; }
.tray-note { width: 44px; margin-right: 12px; display: flex; justify-content: center; }
```
